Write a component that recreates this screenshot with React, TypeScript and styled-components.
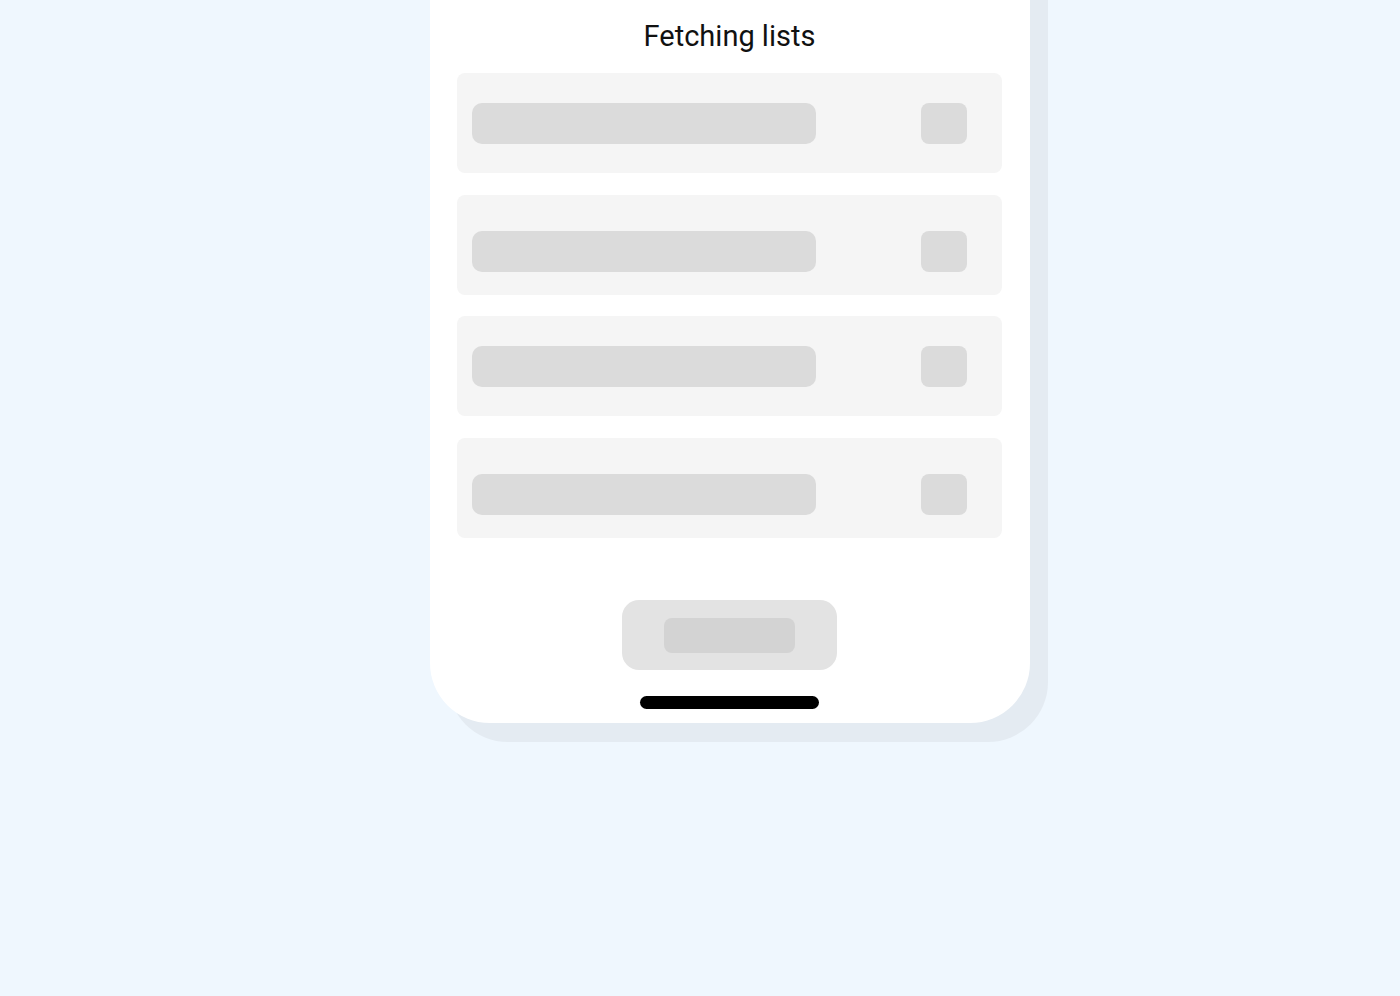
import styled, { createGlobalStyle } from 'styled-components';

const GlobalStyle = createGlobalStyle`
	html, body {
		margin: 0;
		padding: 0;
		background: #eff7fe;
		font-family: Roboto, "Liberation Sans", sans-serif;
		overflow: hidden;
	}
`;

const Stage = styled.main`
	display: flex;
	align-items: flex-start;
	min-height: 996px;
	padding-left: 430px;
	box-sizing: border-box;
`;

// the phone frame runs past the top of the window
const Phone = styled.section`
	display: flex;
	flex-direction: column;
	align-items: center;
	width: 600px;
	height: 803px;
	margin-top: -80px;
	padding: 99px 28px 14px 27px;
	box-sizing: border-box;
	background: #ffffff;
	border-radius: 60px;
	box-shadow: 18px 19px 0 0 #e4ebf2;
`;

const Title = styled.h1`
	margin: 0 0 20px;
	font-size: 29px;
	font-weight: 400;
	line-height: 34px;
	color: #111111;
`;

const List = styled.div`
	display: flex;
	flex-direction: column;
	gap: 21.5px;
	width: 100%;
`;

const Row = styled.div<{ $offset: number }>`
	display: flex;
	align-items: flex-start;
	justify-content: space-between;
	height: 100px;
	padding: ${(p) => p.$offset}px 35px 0 15px;
	box-sizing: border-box;
	background: #f5f5f5;
	border-radius: 8px;
`;

const Bar = styled.div`
	width: 344px;
	height: 41px;
	background: #dbdbdb;
	border-radius: 10px;
`;

const Square = styled.div`
	width: 46px;
	height: 41px;
	background: #dbdbdb;
	border-radius: 8px;
`;

const Footer = styled.div`
	display: flex;
	flex-direction: column;
	align-items: center;
	margin-top: auto;
`;

const Button = styled.div`
	display: flex;
	align-items: center;
	justify-content: center;
	width: 215px;
	height: 70px;
	background: #e3e3e3;
	border-radius: 17px;
`;

const ButtonLabel = styled.div`
	width: 131px;
	height: 35px;
	background: #d3d3d3;
	border-radius: 8px;
`;

const HomeIndicator = styled.div`
	width: 179px;
	height: 13px;
	margin-top: 26px;
	background: #000000;
	border-radius: 7px;
`;

const rows = [30, 36, 30, 36];

const App = () => {
	return (
		<>
			<GlobalStyle />
			<Stage>
				<Phone>
					<Title>Fetching lists</Title>
					<List>
						{rows.map((offset, i) => (
							<Row key={i} $offset={offset}>
								<Bar />
								<Square />
							</Row>
						))}
					</List>
					<Footer>
						<Button>
							<ButtonLabel />
						</Button>
						<HomeIndicator />
					</Footer>
				</Phone>
			</Stage>
		</>
	)
};

export default App;
